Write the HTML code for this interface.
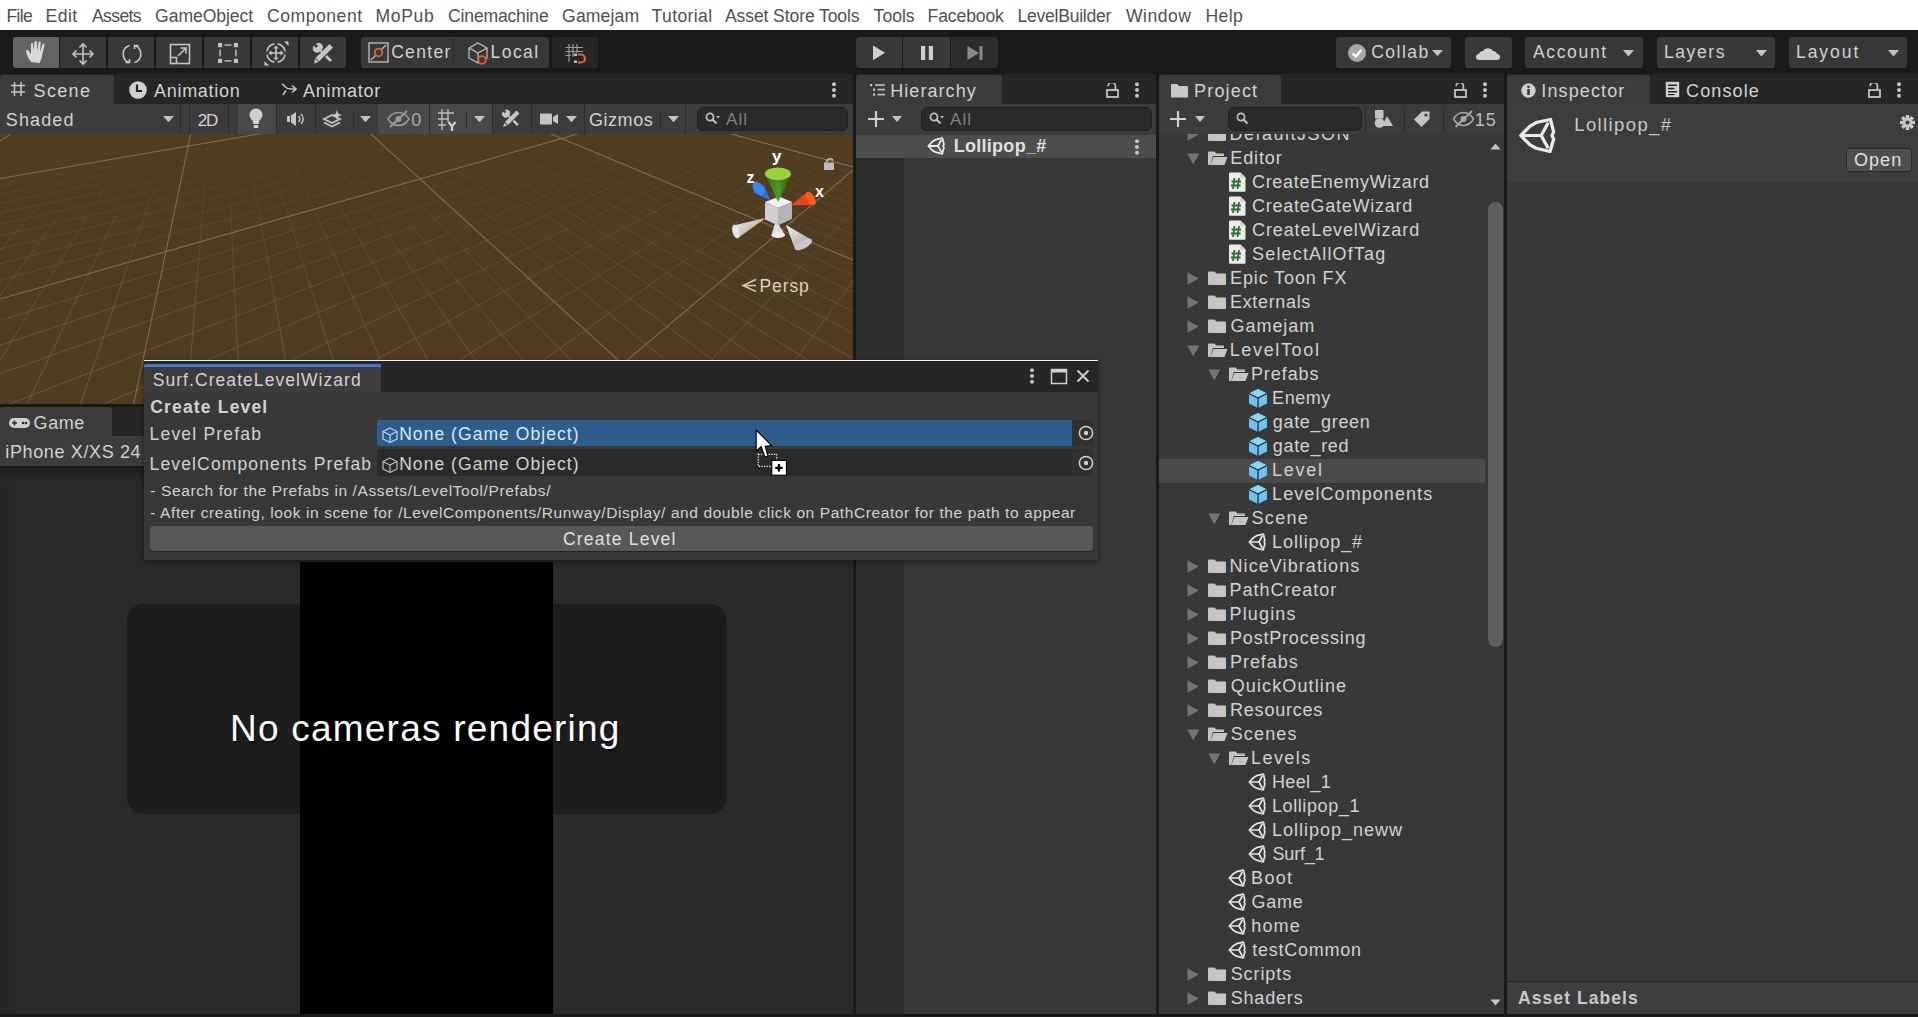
<!DOCTYPE html>
<html><head><meta charset="utf-8"><style>
html,body{margin:0;padding:0;width:1918px;height:1017px;overflow:hidden;background:#191919;}
.a{position:absolute;}
.t{position:absolute;font-family:"Liberation Sans", sans-serif;white-space:pre;}
svg.a{overflow:hidden;}
</style></head><body>
<div class="a" style="left:0px;top:0px;width:1918px;height:30px;background:#ffffff;"></div><div class="t" style="left:6.5568px;top:8.20px;font-size:17.6px;line-height:17.6px;color:#505050;font-weight:400;letter-spacing:-0.71px;">File</div><div class="t" style="left:45.5568px;top:8.20px;font-size:17.6px;line-height:17.6px;color:#505050;font-weight:400;letter-spacing:0.41px;">Edit</div><div class="t" style="left:91.9648px;top:8.20px;font-size:17.6px;line-height:17.6px;color:#505050;font-weight:400;letter-spacing:-0.63px;">Assets</div><div class="t" style="left:155.12px;top:8.20px;font-size:17.6px;line-height:17.6px;color:#505050;font-weight:400;letter-spacing:-0.09px;">GameObject</div><div class="t" style="left:267.12px;top:8.20px;font-size:17.6px;line-height:17.6px;color:#505050;font-weight:400;letter-spacing:0.50px;">Component</div><div class="t" style="left:375.5568px;top:8.20px;font-size:17.6px;line-height:17.6px;color:#505050;font-weight:400;letter-spacing:0.60px;">MoPub</div><div class="t" style="left:448.12px;top:8.20px;font-size:17.6px;line-height:17.6px;color:#505050;font-weight:400;letter-spacing:-0.21px;">Cinemachine</div><div class="t" style="left:562.12px;top:8.20px;font-size:17.6px;line-height:17.6px;color:#505050;font-weight:400;letter-spacing:0.12px;">Gamejam</div><div class="t" style="left:651.6128px;top:8.20px;font-size:17.6px;line-height:17.6px;color:#505050;font-weight:400;letter-spacing:0.36px;">Tutorial</div><div class="t" style="left:724.9648px;top:8.20px;font-size:17.6px;line-height:17.6px;color:#505050;font-weight:400;letter-spacing:-0.12px;">Asset Store Tools</div><div class="t" style="left:873.6128px;top:8.20px;font-size:17.6px;line-height:17.6px;color:#505050;font-weight:400;letter-spacing:-0.01px;">Tools</div><div class="t" style="left:927.5568px;top:8.20px;font-size:17.6px;line-height:17.6px;color:#505050;font-weight:400;letter-spacing:-0.13px;">Facebook</div><div class="t" style="left:1017.5568px;top:8.20px;font-size:17.6px;line-height:17.6px;color:#505050;font-weight:400;letter-spacing:-0.28px;">LevelBuilder</div><div class="t" style="left:1125.9296px;top:8.20px;font-size:17.6px;line-height:17.6px;color:#505050;font-weight:400;letter-spacing:0.49px;">Window</div><div class="t" style="left:1205.5568px;top:8.20px;font-size:17.6px;line-height:17.6px;color:#505050;font-weight:400;letter-spacing:0.32px;">Help</div><div class="a" style="left:0px;top:30px;width:1918px;height:44px;background:#191919;"></div><div class="a" style="left:13px;top:37px;width:334px;height:31px;background:#191919;border-radius:3px;"></div><div class="a" style="left:13px;top:37px;width:46px;height:31px;background:#646464;border-radius:3px 0 0 3px;"></div><div class="a" style="left:60px;top:37px;width:46px;height:31px;background:#383838;border-radius:0;"></div><div class="a" style="left:108px;top:37px;width:46px;height:31px;background:#383838;border-radius:0;"></div><div class="a" style="left:156px;top:37px;width:46px;height:31px;background:#383838;border-radius:0;"></div><div class="a" style="left:204px;top:37px;width:46px;height:31px;background:#383838;border-radius:0;"></div><div class="a" style="left:252px;top:37px;width:46px;height:31px;background:#383838;border-radius:0;"></div><div class="a" style="left:300px;top:37px;width:46px;height:31px;background:#383838;border-radius:0 3px 3px 0;"></div><svg class="a" style="left:25px;top:40px;" width="24" height="26" viewBox="0 0 24 26"><path d="M6 22 C3 18 1.5 14 1 11 C1 10 2.5 9.5 3.5 10.5 L6 14 L6 4 C6 2.6 8 2.6 8 4 L8.5 11 L9.5 2 C9.5 0.6 11.8 0.6 11.8 2 L12 11 L13.5 2.5 C13.7 1.2 15.8 1.3 15.7 2.8 L15 11.5 L17.5 4.5 C18 3.2 19.8 3.7 19.5 5 L17 16 C16.5 19 15.5 21 14.5 23 Z" fill="#d8d8d8"/></svg><svg class="a" style="left:71px;top:42px;" width="24" height="24" viewBox="0 0 24 24"><g stroke="#c4c4c4" stroke-width="1.6" fill="none"><path d="M12 2V22M2 12H22"/><path d="M8.5 5.5L12 2L15.5 5.5M8.5 18.5L12 22L15.5 18.5M5.5 8.5L2 12L5.5 15.5M18.5 8.5L22 12L18.5 15.5"/></g></svg><svg class="a" style="left:120px;top:42px;" width="24" height="24" viewBox="0 0 24 24"><g stroke="#c4c4c4" stroke-width="1.6" fill="none"><path d="M9.5 3.5 A9 9 0 0 0 9 20.5"/><path d="M14.5 20.5 A9 9 0 0 0 15 3.5"/><path d="M5.5 20.5H9.5V17M18.5 3.5H14.5V7"/></g></svg><svg class="a" style="left:168px;top:42px;" width="24" height="24" viewBox="0 0 24 24"><g stroke="#c4c4c4" stroke-width="1.6" fill="none"><rect x="2.5" y="2.5" width="19" height="19"/><path d="M2.5 15.5H8.5V21.5M10 14L18 6M12.5 6H18V11.5"/></g></svg><svg class="a" style="left:216px;top:41px;" width="24" height="24" viewBox="0 0 24 24"><g fill="#c4c4c4"><rect x="2" y="2" width="4.2" height="4.2"/><rect x="17.8" y="2" width="4.2" height="4.2"/><rect x="2" y="17.8" width="4.2" height="4.2"/><rect x="17.8" y="17.8" width="4.2" height="4.2"/><rect x="8.5" y="3.4" width="7" height="1.4"/><rect x="8.5" y="19.2" width="7" height="1.4"/><rect x="3.4" y="8.5" width="1.4" height="7"/><rect x="19.2" y="8.5" width="1.4" height="7"/></g></svg><svg class="a" style="left:264px;top:41px;" width="25" height="25" viewBox="0 0 25 25"><g stroke="#c4c4c4" stroke-width="1.6" fill="none"><path d="M2.9 10.4A9.4 9.4 0 0 1 10.4 2.9M13.6 2.9A9.4 9.4 0 0 1 21.1 10.4M21.1 13.6A9.4 9.4 0 0 1 13.6 21.1M10.4 21.1A9.4 9.4 0 0 1 2.9 13.6"/><path d="M12 6.5V17.5M6.5 12H17.5"/></g><path d="M12 4.5L9.3 7.5H14.7Z M12 19.5L9.3 16.5H14.7Z M4.5 12L7.5 9.3V14.7Z M19.5 12L16.5 9.3V14.7Z M20 0.5H24.5V5Z M0.5 24.5V20L5 24.5Z" fill="#c4c4c4"/></svg><svg class="a" style="left:311px;top:42px;" width="24" height="24" viewBox="0 0 24 24"><g fill="#c4c4c4"><path d="M3 3.5 A4 4 0 0 0 9 9.5 L11 11.5 L12.5 10 L10.5 8 A4 4 0 0 0 5 2 L7 4 L5 6 Z"/><path d="M14 15 L19 20 L21 18 L16 13 Z"/><path d="M18.5 2 L22 5.5 L8 19.5 L4.5 16 Z"/><path d="M4 16.5 L7.5 20 L3 21.5 Z"/></g></svg><div class="a" style="left:361px;top:37px;width:188px;height:31px;background:#383838;border-radius:3px;"></div><div class="a" style="left:453px;top:37px;width:1px;height:31px;background:#2a2a2a;"></div><svg class="a" style="left:368px;top:42px;" width="21" height="21" viewBox="0 0 21 21"><rect x="1" y="1" width="19" height="19" fill="none" stroke="#c4c4c4" stroke-width="1.3"/><path d="M3 18L18 3" stroke="#c4c4c4" stroke-width="1.2"/><circle cx="10.5" cy="10.5" r="3.8" fill="#383838" stroke="#e8622c" stroke-width="1.8"/></svg><div class="t" style="left:391.125px;top:44.29px;font-size:17.5px;line-height:17.5px;color:#d2d2d2;font-weight:400;letter-spacing:1.33px;">Center</div><svg class="a" style="left:467px;top:41px;" width="22" height="25" viewBox="0 0 22 25"><g stroke="#c4c4c4" stroke-width="1.2" fill="none"><path d="M2 7L11 2L20 7L20 17L11 22L2 17Z"/><path d="M2 7L11 12L20 7M11 12V22"/></g><circle cx="15" cy="19" r="3.8" fill="#383838" stroke="#e8622c" stroke-width="1.8"/></svg><div class="t" style="left:490.565px;top:44.29px;font-size:17.5px;line-height:17.5px;color:#d2d2d2;font-weight:400;letter-spacing:1.44px;">Local</div><div class="a" style="left:552px;top:37px;width:46px;height:31px;background:#262626;border-radius:3px;"></div><svg class="a" style="left:565px;top:43px;" width="22" height="22" viewBox="0 0 22 22"><g stroke="#9a9a9a" stroke-width="1.2" fill="none"><path d="M4 1V19M8 1V14M12 1V10M0.5 4.5H18M0.5 8.5H18M0.5 12.5H6"/></g><path d="M13 11.5H16A4 4 0 0 1 16 19.5H13" stroke="#e8622c" stroke-width="2.2" fill="none"/><rect x="9" y="10.5" width="3" height="2.5" fill="#bbb"/><rect x="9" y="17.5" width="3" height="2.5" fill="#bbb"/></svg><div class="a" style="left:856px;top:37px;width:46px;height:31px;background:#383838;border-radius:4px 0 0 4px;"></div><div class="a" style="left:903px;top:37px;width:47px;height:31px;background:#383838;"></div><div class="a" style="left:951px;top:37px;width:47px;height:31px;background:#2c2c2c;border-radius:0 4px 4px 0;"></div><svg class="a" style="left:872px;top:45px;" width="14" height="16" viewBox="0 0 14 16"><path d="M1 0.5L13 7.8L1 15.2Z" fill="#d0d0d0"/></svg><svg class="a" style="left:920px;top:45px;" width="14" height="16" viewBox="0 0 14 16"><rect x="1" y="1" width="4.2" height="14" fill="#d0d0d0"/><rect x="8.8" y="1" width="4.2" height="14" fill="#d0d0d0"/></svg><svg class="a" style="left:967px;top:45px;" width="16" height="16" viewBox="0 0 16 16"><path d="M0.5 1L12 8L0.5 15Z M12.5 1H15.5V15H12.5Z" fill="#8a8a8a"/></svg><div class="a" style="left:1336px;top:37px;width:115px;height:31px;background:#383838;border-radius:3px;"></div><div class="a" style="left:1465px;top:37px;width:47px;height:31px;background:#383838;border-radius:3px;"></div><div class="a" style="left:1525px;top:37px;width:118px;height:31px;background:#383838;border-radius:3px;"></div><div class="a" style="left:1657px;top:37px;width:118px;height:31px;background:#383838;border-radius:3px;"></div><div class="a" style="left:1789px;top:37px;width:118px;height:31px;background:#383838;border-radius:3px;"></div><svg class="a" style="left:1347px;top:43px;" width="20" height="20" viewBox="0 0 20 20"><circle cx="10" cy="10" r="9" fill="#a8a8a8"/><path d="M5.5 10.5L8.8 13.5L14.5 6.8" stroke="#fff" stroke-width="2.3" fill="none"/></svg><div class="t" style="left:1371.125px;top:44.39px;font-size:17.5px;line-height:17.5px;color:#d2d2d2;font-weight:400;letter-spacing:1.50px;">Collab</div><svg class="a" style="left:1431.5px;top:49.5px;" width="11" height="6" viewBox="0 0 11 6"><path d="M0 0H11L5.5 6Z" fill="#c4c4c4"/></svg><svg class="a" style="left:1476px;top:45px;" width="24" height="16" viewBox="0 0 24 16"><path d="M3 15 H21 A3 3 0 0 0 21 9 A4 4 0 0 0 17 6 A6 6 0 0 0 7 6 A4 4 0 0 0 3 9 A3 3 0 0 0 3 15Z" fill="#d0d0d0"/></svg><div class="t" style="left:1532.965px;top:44.39px;font-size:17.5px;line-height:17.5px;color:#d2d2d2;font-weight:400;letter-spacing:1.66px;">Account</div><svg class="a" style="left:1623.0px;top:49.95px;" width="11" height="6.5" viewBox="0 0 11 6.5"><path d="M0 0H11L5.5 6.5Z" fill="#c4c4c4"/></svg><div class="t" style="left:1663.9650000000001px;top:44.39px;font-size:17.5px;line-height:17.5px;color:#d2d2d2;font-weight:400;letter-spacing:1.59px;">Layers</div><svg class="a" style="left:1755.5px;top:49.95px;" width="11" height="6.5" viewBox="0 0 11 6.5"><path d="M0 0H11L5.5 6.5Z" fill="#c4c4c4"/></svg><div class="t" style="left:1795.9650000000001px;top:44.39px;font-size:17.5px;line-height:17.5px;color:#d2d2d2;font-weight:400;letter-spacing:1.96px;">Layout</div><svg class="a" style="left:1887.5px;top:49.95px;" width="11" height="6.5" viewBox="0 0 11 6.5"><path d="M0 0H11L5.5 6.5Z" fill="#c4c4c4"/></svg><div class="a" style="left:0px;top:74px;width:853px;height:30px;background:#262626;"></div><div class="a" style="left:0px;top:75px;width:114px;height:29px;background:#3c3c3c;border-radius:4px 4px 0 0;"></div><svg class="a" style="left:10px;top:81px;" width="16" height="16" viewBox="0 0 16 16"><g stroke="#c4c4c4" stroke-width="1.5"><path d="M4.5 1V15M11 1V15M1 4.5H15M1 11H15"/></g></svg><div class="t" style="left:33.589999999999996px;top:82.46px;font-size:18px;line-height:18px;color:#d2d2d2;font-weight:400;letter-spacing:1.34px;">Scene</div><svg class="a" style="left:129px;top:81px;" width="18" height="18" viewBox="0 0 18 18"><circle cx="9" cy="9" r="8.8" fill="#d0d0d0"/><path d="M8 3.5V10H13" stroke="#232323" stroke-width="2.2" fill="none"/></svg><div class="t" style="left:153.964px;top:82.46px;font-size:18px;line-height:18px;color:#d2d2d2;font-weight:400;letter-spacing:0.72px;">Animation</div><svg class="a" style="left:281px;top:82px;" width="16" height="14" viewBox="0 0 16 14"><path d="M1 1.5L5 5.5C6.5 7 8 7 10 7H15M11 3.5L15 7L11 10.5M5 8.5L2 13" stroke="#c4c4c4" stroke-width="1.6" fill="none"/></svg><div class="t" style="left:302.964px;top:82.46px;font-size:18px;line-height:18px;color:#d2d2d2;font-weight:400;letter-spacing:0.76px;">Animator</div><svg class="a" style="left:831px;top:81px;" width="6" height="18" viewBox="0 0 6 18"><g fill="#c4c4c4"><circle cx="3" cy="3.3" r="2"/><circle cx="3" cy="9" r="2"/><circle cx="3" cy="14.7" r="2"/></g></svg><div class="a" style="left:0px;top:104px;width:853px;height:30px;background:#3c3c3c;"></div><div class="t" style="left:5.789999999999999px;top:110.86px;font-size:18px;line-height:18px;color:#d2d2d2;font-weight:400;letter-spacing:1.12px;">Shaded</div><svg class="a" style="left:162.5px;top:115.9px;" width="11" height="6.2" viewBox="0 0 11 6.2"><path d="M0 0H11L5.5 6.2Z" fill="#c4c4c4"/></svg><div class="a" style="left:180px;top:104px;width:1px;height:30px;background:#2b2b2b;"></div><div class="a" style="left:189px;top:104px;width:1px;height:30px;background:#2b2b2b;"></div><div class="t" style="left:197.85px;top:111.71px;font-size:17px;line-height:17px;color:#d2d2d2;font-weight:500;letter-spacing:-1.28px;">2D</div><div class="a" style="left:228px;top:104px;width:1px;height:30px;background:#2b2b2b;"></div><div class="a" style="left:238px;top:104px;width:38px;height:30px;background:#494949;"></div><svg class="a" style="left:248px;top:108px;" width="16" height="24" viewBox="0 0 16 24"><circle cx="8" cy="7" r="6.5" fill="#d0d0d0"/><path d="M4.5 12H11.5L10.5 16H5.5Z" fill="#d0d0d0"/><rect x="5.5" y="17" width="5" height="3" rx="1.2" fill="#d0d0d0"/></svg><div class="a" style="left:276px;top:104px;width:1px;height:30px;background:#2b2b2b;"></div><svg class="a" style="left:286px;top:111px;" width="20" height="16" viewBox="0 0 20 16"><path d="M1 5H4V11H1Z M5 4.5L10 1V15L5 11.5Z" fill="#c4c4c4"/><path d="M12.5 5A4 4 0 0 1 12.5 11M15 3A7 7 0 0 1 15 13" stroke="#c4c4c4" stroke-width="1.5" fill="none"/></svg><div class="a" style="left:315px;top:104px;width:1px;height:30px;background:#2b2b2b;"></div><svg class="a" style="left:322px;top:109px;" width="24" height="20" viewBox="0 0 24 20"><path d="M2 10L10 6L18 10L10 14Z M2 13.5L10 17.5L18 13.5" stroke="#c4c4c4" stroke-width="1.8" fill="none"/><path d="M15 1L16.3 4.7L20 6L16.3 7.3L15 11L13.7 7.3L10 6L13.7 4.7Z" fill="#c4c4c4"/></svg><div class="a" style="left:353px;top:110px;width:1px;height:18px;background:#2b2b2b;"></div><svg class="a" style="left:359.5px;top:115.9px;" width="11" height="6.2" viewBox="0 0 11 6.2"><path d="M0 0H11L5.5 6.2Z" fill="#c4c4c4"/></svg><div class="a" style="left:378px;top:104px;width:51px;height:30px;background:#494949;"></div><svg class="a" style="left:386px;top:110px;" width="26" height="18" viewBox="0 0 26 18"><path d="M2 9C5 4 9 2.5 12.5 2.5S20 4 23 9C20 14 16 15.5 12.5 15.5S5 14 2 9Z" stroke="#9a9a9a" stroke-width="1.5" fill="none"/><circle cx="12.5" cy="9" r="3" fill="#9a9a9a"/><path d="M4 17L21 1" stroke="#9a9a9a" stroke-width="1.8"/></svg><div class="t" style="left:411.298px;top:111.26px;font-size:18px;line-height:18px;color:#a8a8a8;font-weight:400;letter-spacing:0.00px;">0</div><div class="a" style="left:429px;top:104px;width:63px;height:30px;background:#494949;border-left:1px solid #2b2b2b;box-sizing:border-box;"></div><svg class="a" style="left:437px;top:108px;" width="22" height="24" viewBox="0 0 22 24"><g stroke="#bdbdbd" stroke-width="1.4"><path d="M5 1V22M11 1V14M1 5H17M1 11H12M1 17H9"/></g><path d="M11.5 14L15 18.5L18.5 14M15 18.5V23" stroke="#d0d0d0" stroke-width="2.2" fill="none"/></svg><div class="a" style="left:466px;top:111px;width:1px;height:17px;background:#2b2b2b;"></div><svg class="a" style="left:473.5px;top:115.9px;" width="11" height="6.2" viewBox="0 0 11 6.2"><path d="M0 0H11L5.5 6.2Z" fill="#c4c4c4"/></svg><div class="a" style="left:492px;top:104px;width:1px;height:30px;background:#2b2b2b;"></div><svg class="a" style="left:501px;top:109px;" width="20" height="20" viewBox="0 0 20 20"><g fill="#c4c4c4"><path d="M2 2.5A3.4 3.4 0 0 0 7 7.5L9 9.5L10.2 8.3L8.2 6.3A3.4 3.4 0 0 0 3.8 1.2L5.2 2.8L3.6 4.2Z"/><path d="M11.5 12.5L16 17L17.8 15.2L13.3 10.7Z"/><path d="M15.5 1.5L18.5 4.5L7 16L4 13Z"/><path d="M3.5 14L6 16.5L2 18Z"/></g></svg><div class="a" style="left:531px;top:104px;width:1px;height:30px;background:#2b2b2b;"></div><svg class="a" style="left:539px;top:112px;" width="20" height="14" viewBox="0 0 20 14"><rect x="1" y="1.5" width="12" height="11" rx="1" fill="#c4c4c4"/><path d="M14 5L19 2V12L14 9Z" fill="#c4c4c4"/></svg><svg class="a" style="left:565.5px;top:115.9px;" width="11" height="6.2" viewBox="0 0 11 6.2"><path d="M0 0H11L5.5 6.2Z" fill="#c4c4c4"/></svg><div class="a" style="left:584px;top:104px;width:1px;height:30px;background:#2b2b2b;"></div><div class="t" style="left:589.1px;top:111.26px;font-size:18px;line-height:18px;color:#d2d2d2;font-weight:400;letter-spacing:0.51px;">Gizmos</div><div class="a" style="left:660px;top:110px;width:1px;height:18px;background:#2b2b2b;"></div><svg class="a" style="left:667.5px;top:115.9px;" width="11" height="6.2" viewBox="0 0 11 6.2"><path d="M0 0H11L5.5 6.2Z" fill="#c4c4c4"/></svg><div class="a" style="left:685px;top:104px;width:1px;height:30px;background:#2b2b2b;"></div><div class="a" style="left:697px;top:107px;width:151px;height:24px;background:#2a2a2a;border-radius:6px;border:1px solid #212121;box-sizing:border-box;"></div><svg class="a" style="left:705px;top:112px;" width="16" height="14" viewBox="0 0 16 14"><circle cx="5" cy="5" r="3.6" stroke="#c0c0c0" stroke-width="1.7" fill="none"/><path d="M7.5 7.5L11.5 11.5" stroke="#c0c0c0" stroke-width="2"/><path d="M11 4H15L13 6.5Z" fill="#c0c0c0"/></svg><div class="t" style="left:725.966px;top:111.11px;font-size:17px;line-height:17px;color:#808080;font-weight:400;letter-spacing:1.13px;">All</div><svg class="a" style="left:0px;top:134px;" width="853" height="270" viewBox="0 0 853 270"><defs><linearGradient id="gm" x1="0" y1="0" x2="0" y2="1"><stop offset="0" stop-color="#fff" stop-opacity="0.08"/><stop offset="0.45" stop-color="#fff" stop-opacity="0.55"/><stop offset="1" stop-color="#fff" stop-opacity="1"/></linearGradient><mask id="mk"><rect width="853" height="270" fill="url(#gm)"/></mask></defs><rect width="853" height="270" fill="#503c20"/><path d="M1060.0 -138.0L-1933.2 64.0M1060.0 -138.0L-1933.0 67.2M1060.0 -138.0L-1932.7 70.5M1060.0 -138.0L-1932.5 73.9M1060.0 -138.0L-1932.3 77.4M1060.0 -138.0L-1932.0 81.0M1060.0 -138.0L-1931.7 84.8M1060.0 -138.0L-1931.4 88.6M1060.0 -138.0L-1931.1 92.6M1060.0 -138.0L-1930.5 101.1M1060.0 -138.0L-1930.1 105.6M1060.0 -138.0L-1929.7 110.2M1060.0 -138.0L-1929.3 115.0M1060.0 -138.0L-1928.9 120.1M1060.0 -138.0L-1928.4 125.3M1060.0 -138.0L-1927.9 130.7M1060.0 -138.0L-1927.4 136.3M1060.0 -138.0L-1926.9 142.2M1060.0 -138.0L-1925.7 154.8M1060.0 -138.0L-1925.0 161.5M1060.0 -138.0L-1924.3 168.6M1060.0 -138.0L-1923.5 175.9M1060.0 -138.0L-1922.7 183.7M1060.0 -138.0L-1921.8 191.8M1060.0 -138.0L-1920.9 200.3M1060.0 -138.0L-1919.8 209.3M1060.0 -138.0L-1918.7 218.8M1060.0 -138.0L-1916.2 239.4M1060.0 -138.0L-1914.7 250.6M1060.0 -138.0L-1913.2 262.4M1060.0 -138.0L-1911.4 275.0M1060.0 -138.0L-1909.5 288.5M1060.0 -138.0L-1907.4 302.8M1060.0 -138.0L-1905.1 318.1M1060.0 -138.0L-1902.6 334.5M1060.0 -138.0L-1899.7 352.1M1060.0 -138.0L-1892.9 391.5M1060.0 -138.0L-1888.9 413.6M1060.0 -138.0L-1884.3 437.6M1060.0 -138.0L-1879.0 463.7M1060.0 -138.0L-1873.0 492.3M1060.0 -138.0L-1866.1 523.7M1060.0 -138.0L-1858.1 558.2M1060.0 -138.0L-1848.7 596.4M1060.0 -138.0L-1837.6 639.0M1060.0 -138.0L-1808.7 739.9M1060.0 -138.0L-1789.5 800.4M1060.0 -138.0L-1765.9 869.2M1060.0 -138.0L-1736.5 948.2M1060.0 -138.0L-1699.3 1039.4M1060.0 -138.0L-1651.6 1145.5M1060.0 -138.0L-1589.1 1269.9M1060.0 -138.0L-1505.9 1416.5M1060.0 -138.0L-1392.6 1589.6M1060.0 -138.0L-1015.0 2028.6M1060.0 -138.0L-703.7 2288.8M1060.0 -138.0L-272.6 2549.8M220.0 -138.0L-2734.8 381.0M220.0 -138.0L-2732.7 392.8M220.0 -138.0L-2728.0 418.1M220.0 -138.0L-2725.4 431.6M220.0 -138.0L-2722.6 445.8M220.0 -138.0L-2719.6 460.8M220.0 -138.0L-2716.4 476.4M220.0 -138.0L-2712.9 492.9M220.0 -138.0L-2709.1 510.3M220.0 -138.0L-2705.0 528.6M220.0 -138.0L-2700.5 548.0M220.0 -138.0L-2690.3 590.3M220.0 -138.0L-2684.4 613.3M220.0 -138.0L-2677.9 637.9M220.0 -138.0L-2670.8 664.0M220.0 -138.0L-2662.9 691.8M220.0 -138.0L-2654.2 721.6M220.0 -138.0L-2644.5 753.5M220.0 -138.0L-2633.6 787.7M220.0 -138.0L-2621.4 824.5M220.0 -138.0L-2592.1 907.0M220.0 -138.0L-2574.5 953.3M220.0 -138.0L-2554.3 1003.6M220.0 -138.0L-2531.1 1058.4M220.0 -138.0L-2504.4 1118.0M220.0 -138.0L-2473.4 1183.2M220.0 -138.0L-2437.2 1254.6M220.0 -138.0L-2394.7 1332.9M220.0 -138.0L-2344.4 1418.9M220.0 -138.0L-2212.9 1617.3M220.0 -138.0L-2126.7 1731.0M220.0 -138.0L-2022.3 1855.0M220.0 -138.0L-1895.5 1989.1M220.0 -138.0L-1741.4 2132.0M220.0 -138.0L-1554.4 2281.0M220.0 -138.0L-1329.2 2431.0M220.0 -138.0L-1061.7 2574.4M220.0 -138.0L-750.9 2700.5M220.0 -138.0L-22.3 2852.2M220.0 -138.0L368.2 2858.3M220.0 -138.0L751.4 2814.6M220.0 -138.0L1109.5 2727.1M220.0 -138.0L1430.5 2607.0M220.0 -138.0L1708.5 2466.7M220.0 -138.0L1943.6 2317.4M220.0 -138.0L2139.4 2167.6M220.0 -138.0L2300.9 2022.9M220.0 -138.0L2543.2 1760.1M220.0 -138.0L2633.5 1643.9M220.0 -138.0L2708.4 1537.7M220.0 -138.0L2770.8 1441.0M220.0 -138.0L2823.3 1353.0M220.0 -138.0L2867.5 1272.9M220.0 -138.0L2905.2 1199.9M220.0 -138.0L2937.3 1133.3M220.0 -138.0L2965.0 1072.3M220.0 -138.0L3009.8 965.1M220.0 -138.0L3028.1 917.9M220.0 -138.0L3044.1 874.2M220.0 -138.0L3058.2 833.8M220.0 -138.0L3070.8 796.4M220.0 -138.0L3082.0 761.6M220.0 -138.0L3091.9 729.1M220.0 -138.0L3100.9 698.9M220.0 -138.0L3109.0 670.6M220.0 -138.0L3122.9 619.1M220.0 -138.0L3128.9 595.7M220.0 -138.0L3134.4 573.7M220.0 -138.0L3139.4 552.9M220.0 -138.0L3143.9 533.2M220.0 -138.0L3148.1 514.7M220.0 -138.0L3152.0 497.0M220.0 -138.0L3155.6 480.3M220.0 -138.0L3158.9 464.5M220.0 -138.0L3164.8 435.0M220.0 -138.0L3167.4 421.3M220.0 -138.0L3169.8 408.3M220.0 -138.0L3172.1 395.8M220.0 -138.0L3174.3 383.9M220.0 -138.0L3176.3 372.4M220.0 -138.0L3178.1 361.5M220.0 -138.0L3179.9 351.0M220.0 -138.0L3181.5 341.0M220.0 -138.0L3184.5 322.0M220.0 -138.0L3185.9 313.1M220.0 -138.0L3187.2 304.5M220.0 -138.0L3188.4 296.3M220.0 -138.0L3189.6 288.3M220.0 -138.0L3190.7 280.6M220.0 -138.0L3191.7 273.2M220.0 -138.0L3192.7 266.0M220.0 -138.0L3193.6 259.1M220.0 -138.0L3195.3 246.0M220.0 -138.0L3196.1 239.7M220.0 -138.0L3196.9 233.6M220.0 -138.0L3197.6 227.8M220.0 -138.0L3198.3 222.1M220.0 -138.0L3199.0 216.6M220.0 -138.0L3199.6 211.2M220.0 -138.0L3200.2 206.0M220.0 -138.0L3200.8 201.0M220.0 -138.0L3201.9 191.3M220.0 -138.0L3202.4 186.7M220.0 -138.0L3202.9 182.2M220.0 -138.0L3203.3 177.8M220.0 -138.0L3203.8 173.6M220.0 -138.0L3204.2 169.4M220.0 -138.0L3204.6 165.4M220.0 -138.0L3205.0 161.5M220.0 -138.0L3205.4 157.6" stroke="#7a6444" stroke-opacity="0.75" stroke-width="1" fill="none" mask="url(#mk)"/><path d="M1060.0 -138.0L-1933.4 60.9M1060.0 -138.0L-1930.8 96.8M1060.0 -138.0L-1926.3 148.4M1060.0 -138.0L-1917.5 228.8M1060.0 -138.0L-1896.5 371.0M1060.0 -138.0L-1824.5 686.5M1060.0 -138.0L-1235.7 1793.3M220.0 -138.0L-2730.4 405.2M220.0 -138.0L-2695.6 568.5M220.0 -138.0L-2607.7 864.2M220.0 -138.0L-2284.5 1513.5M220.0 -138.0L-400.9 2797.0M220.0 -138.0L2433.8 1886.6M220.0 -138.0L2989.0 1016.5M220.0 -138.0L3116.3 644.0M220.0 -138.0L3161.9 449.4M220.0 -138.0L3183.1 331.3M220.0 -138.0L3194.5 252.4M220.0 -138.0L3201.3 196.1" stroke="#877155" stroke-opacity="0.9" stroke-width="1.1" fill="none"/></svg><svg class="a" style="left:730px;top:145px;" width="110" height="110" viewBox="0 0 110 110"><defs>
<linearGradient id="gw" x1="0" y1="0" x2="1" y2="1"><stop offset="0" stop-color="#f0f0f0"/><stop offset="1" stop-color="#9a9a9a"/></linearGradient>
<linearGradient id="gg" x1="0" y1="0" x2="1" y2="0"><stop offset="0" stop-color="#2f6d1a"/><stop offset="0.5" stop-color="#4d9a22"/><stop offset="1" stop-color="#2a5a16"/></linearGradient>
</defs><path d="M35.6 73.0L3.5 80.5L8.0 93.0Z" fill="url(#gw)"/><ellipse cx="6" cy="86.5" rx="3.5" ry="7" transform="rotate(-15 6 86.5)" fill="#e6e6e6"/><path d="M56.0 80.0L65.0 104.0L82.0 95.0Z" fill="url(#gw)"/><ellipse cx="73.5" cy="99.5" rx="9.5" ry="4" transform="rotate(-28 73.5 99.5)" fill="#c8c8c8"/><path d="M46.0 75.0L41.5 90.0L55.0 90.0Z" fill="#e0e0e0"/><ellipse cx="48.200000000000045" cy="90" rx="6.8" ry="3" fill="#eeeeee"/><path d="M35.0 57.0L49.0 51.5L62.0 57.0L48.0 63.0Z" fill="#f2f2f2"/><path d="M35.0 57.0L48.0 63.0L48.0 80.5L35.0 74.5Z" fill="#cfcfcf"/><path d="M48.0 63.0L62.0 57.0L62.0 74.0L48.0 80.5Z" fill="#b4b4b4"/><path d="M40.4 55.6L23.0 47.0L34.0 40.0Z" fill="#2f6fe0"/><ellipse cx="28.5" cy="43.5" rx="5" ry="7.5" transform="rotate(-35 28.5 43.5)" fill="#3d86f2"/><path d="M60.8 60.3L77.0 47.0L84.5 60.0Z" fill="#e2481a"/><ellipse cx="80.79999999999995" cy="53.5" rx="3.8" ry="7.5" transform="rotate(-30 80.79999999999995 53.5)" fill="#ff5a22"/><path d="M35.0 29.0L61.0 29.0L48.2 57.0Z" fill="url(#gg)"/><ellipse cx="47.89999999999998" cy="28.80000000000001" rx="13" ry="6.3" fill="#9ad23c"/><text x="42" y="17" font-family="Liberation Sans" font-size="17" font-weight="700" fill="#ffffff">y</text><text x="16.5" y="38" font-family="Liberation Sans" font-size="16" font-weight="700" fill="#ffffff">z</text><text x="85" y="51.5" font-family="Liberation Sans" font-size="16" font-weight="700" fill="#ffffff">x</text><path d="M96.5 17.5A3.5 3.5 0 0 1 103.0 15.5" stroke="#c8c8c8" stroke-width="1.6" fill="none"/><rect x="94" y="17.5" width="10" height="7.5" fill="#bdbdbd"/></svg><svg class="a" style="left:741px;top:278px;" width="16" height="15" viewBox="0 0 16 15"><path d="M15 1.5L2 7.5L15 13.5M15 7.5H4" stroke="#d4c8b4" stroke-width="1.5" fill="none"/></svg><div class="t" style="left:759.565px;top:277.59px;font-size:17.5px;line-height:17.5px;color:#ddd2c0;font-weight:400;letter-spacing:0.86px;">Persp</div><div class="a" style="left:0px;top:404px;width:853px;height:3px;background:#191919;"></div><div class="a" style="left:0px;top:407px;width:853px;height:29px;background:#262626;"></div><div class="a" style="left:0px;top:407px;width:112px;height:29px;background:#3c3c3c;border-radius:4px 4px 0 0;"></div><svg class="a" style="left:9px;top:417px;" width="21" height="12" viewBox="0 0 21 12"><path d="M5 1H16A4.5 4.5 0 0 1 16 11H5A4.5 4.5 0 0 1 5 1Z" fill="#d0d0d0"/><path d="M3 6H8M5.5 3.5V8.5" stroke="#2a2a2a" stroke-width="1.6"/><circle cx="14" cy="6" r="1.3" fill="#2a2a2a"/><circle cx="17" cy="6" r="1.3" fill="#2a2a2a"/></svg><div class="t" style="left:33.6px;top:414.26px;font-size:18px;line-height:18px;color:#d2d2d2;font-weight:400;letter-spacing:0.56px;">Game</div><div class="a" style="left:0px;top:436px;width:853px;height:30px;background:#3c3c3c;"></div><div class="t" style="left:5.312px;top:443.26px;font-size:18px;line-height:18px;color:#d2d2d2;font-weight:400;letter-spacing:0.63px;">iPhone X/XS 24</div><div class="a" style="left:0px;top:466px;width:853px;height:548px;background:#2a2a2a;"></div><div class="a" style="left:0px;top:466px;width:15px;height:548px;background:#272727;"></div><div class="a" style="left:0px;top:466px;width:853px;height:16px;background:linear-gradient(#1b1b1b,#2a2a2a);"></div><div class="a" style="left:127px;top:604px;width:600px;height:210px;background:#1d1d1d;border-radius:17px;"></div><div class="a" style="left:300px;top:562px;width:253px;height:452px;background:#000000;"></div><div class="t" style="left:229.966px;top:710.18px;font-size:37px;line-height:37px;color:#ffffff;font-weight:400;text-shadow:1px 2px 2px rgba(0,0,0,0.6);letter-spacing:1.23px;">No cameras rendering</div><div class="a" style="left:853px;top:74px;width:3px;height:943px;background:#191919;"></div><div class="a" style="left:856px;top:74px;width:300px;height:30px;background:#262626;"></div><div class="a" style="left:856px;top:75px;width:146px;height:29px;background:#3c3c3c;border-radius:4px 4px 0 0;"></div><svg class="a" style="left:869px;top:83px;" width="17" height="14" viewBox="0 0 17 14"><g fill="#c4c4c4"><rect x="1" y="1" width="2.2" height="2.2"/><rect x="4" y="5.5" width="2.2" height="2.2"/><rect x="4" y="10.5" width="2.2" height="2.2"/><rect x="6" y="1.2" width="10" height="1.6"/><rect x="8.5" y="5.8" width="7.5" height="1.6"/><rect x="8.5" y="10.8" width="7.5" height="1.6"/></g></svg><div class="t" style="left:890.224px;top:82.46px;font-size:18px;line-height:18px;color:#d2d2d2;font-weight:400;letter-spacing:1.06px;">Hierarchy</div><svg class="a" style="left:1106px;top:83px;" width="14" height="16" viewBox="0 0 14 16"><path d="M2.2 3.2A3.6 3.6 0 0 1 9.4 2.8V7" stroke="#c4c4c4" stroke-width="1.7" fill="none"/><rect x="1" y="7" width="11" height="7" fill="none" stroke="#c4c4c4" stroke-width="1.8"/></svg><svg class="a" style="left:1134px;top:81px;" width="6" height="18" viewBox="0 0 6 18"><g fill="#c4c4c4"><circle cx="3" cy="3.3" r="2"/><circle cx="3" cy="9" r="2"/><circle cx="3" cy="14.7" r="2"/></g></svg><div class="a" style="left:856px;top:104px;width:300px;height:31px;background:#3c3c3c;"></div><svg class="a" style="left:866px;top:109px;" width="20" height="20" viewBox="0 0 20 20"><path d="M10 2V18M2 10H18" stroke="#d0d0d0" stroke-width="2.2"/></svg><svg class="a" style="left:891.5px;top:116.0px;" width="10" height="6" viewBox="0 0 10 6"><path d="M0 0H10L5.0 6Z" fill="#c4c4c4"/></svg><div class="a" style="left:921px;top:107px;width:231px;height:24px;background:#2a2a2a;border-radius:6px;border:1px solid #212121;box-sizing:border-box;"></div><svg class="a" style="left:929px;top:112px;" width="16" height="14" viewBox="0 0 16 14"><circle cx="5" cy="5" r="3.6" stroke="#c0c0c0" stroke-width="1.7" fill="none"/><path d="M7.5 7.5L11.5 11.5" stroke="#c0c0c0" stroke-width="2"/><path d="M11 4H15L13 6.5Z" fill="#c0c0c0"/></svg><div class="t" style="left:949.966px;top:111.11px;font-size:17px;line-height:17px;color:#808080;font-weight:400;letter-spacing:1.13px;">All</div><div class="a" style="left:856px;top:135px;width:300px;height:879px;background:#383838;"></div><div class="a" style="left:856px;top:158px;width:48px;height:856px;background:#2e2e2e;"></div><div class="a" style="left:856px;top:135px;width:300px;height:23px;background:#4d4d4d;"></div><svg class="a" style="left:926.5px;top:137px;" width="18" height="18" viewBox="0 0 18 18"><g transform="scale(1.0 1.0)" stroke="#e8e8e8" stroke-width="1.8" fill="none" stroke-linejoin="round"><path d="M1.3 9L5.7 4.4L8.6 2.7L15.4 1.2L16.9 7.3L16.1 9L16.9 10.7L15.2 16.8L8.6 15.2L5.7 13.6Z"/><path d="M1.5 9H11L14.3 2.8M11 9L14.3 15.2"/></g></svg><div class="t" style="left:953.712px;top:136.96px;font-size:18px;line-height:18px;color:#e0e0e0;font-weight:700;letter-spacing:0.28px;">Lollipop_#</div><svg class="a" style="left:1134px;top:137.5px;" width="6" height="18" viewBox="0 0 6 18"><g fill="#c4c4c4"><circle cx="3" cy="3.3" r="2"/><circle cx="3" cy="9" r="2"/><circle cx="3" cy="14.7" r="2"/></g></svg><div class="a" style="left:1156px;top:74px;width:3px;height:943px;background:#191919;"></div><div class="a" style="left:1159px;top:74px;width:345px;height:30px;background:#262626;"></div><div class="a" style="left:1159px;top:75px;width:122px;height:29px;background:#3c3c3c;border-radius:4px 4px 0 0;"></div><svg class="a" style="left:1170px;top:83px;" width="19" height="15" viewBox="0 0 19 15"><path d="M1 2Q1 1 2 1H7L9 3H17Q18 3 18 4V13.5Q18 14.5 17 14.5H2Q1 14.5 1 13.5Z" fill="#c8c8c8"/></svg><div class="t" style="left:1194.1239999999998px;top:82.46px;font-size:18px;line-height:18px;color:#d2d2d2;font-weight:400;letter-spacing:1.16px;">Project</div><svg class="a" style="left:1454px;top:83px;" width="14" height="16" viewBox="0 0 14 16"><path d="M2.2 3.2A3.6 3.6 0 0 1 9.4 2.8V7" stroke="#c4c4c4" stroke-width="1.7" fill="none"/><rect x="1" y="7" width="11" height="7" fill="none" stroke="#c4c4c4" stroke-width="1.8"/></svg><svg class="a" style="left:1482px;top:81px;" width="6" height="18" viewBox="0 0 6 18"><g fill="#c4c4c4"><circle cx="3" cy="3.3" r="2"/><circle cx="3" cy="9" r="2"/><circle cx="3" cy="14.7" r="2"/></g></svg><div class="a" style="left:1159px;top:104px;width:345px;height:30px;background:#3c3c3c;"></div><svg class="a" style="left:1168px;top:109px;" width="20" height="20" viewBox="0 0 20 20"><path d="M10 2V18M2 10H18" stroke="#d0d0d0" stroke-width="2.2"/></svg><svg class="a" style="left:1194.5px;top:116.0px;" width="10" height="6" viewBox="0 0 10 6"><path d="M0 0H10L5.0 6Z" fill="#c4c4c4"/></svg><div class="a" style="left:1227.6px;top:107px;width:134.4px;height:23.5px;background:#2a2a2a;border-radius:6px;border:1px solid #212121;box-sizing:border-box;"></div><svg class="a" style="left:1236px;top:112px;" width="16" height="14" viewBox="0 0 16 14"><circle cx="5" cy="5" r="3.6" stroke="#c0c0c0" stroke-width="1.7" fill="none"/><path d="M7.5 7.5L11.5 11.5" stroke="#c0c0c0" stroke-width="2"/></svg><div class="a" style="left:1365px;top:106px;width:1px;height:27px;background:#2b2b2b;"></div><div class="a" style="left:1404px;top:106px;width:1px;height:27px;background:#2b2b2b;"></div><div class="a" style="left:1443px;top:106px;width:1px;height:27px;background:#2b2b2b;"></div><svg class="a" style="left:1374px;top:109px;" width="20" height="20" viewBox="0 0 20 20"><circle cx="5.5" cy="14" r="4.8" fill="#c4c4c4"/><rect x="1" y="1" width="8.5" height="8.5" fill="#c4c4c4"/><path d="M13 7L19 17H8Z" fill="#c4c4c4"/></svg><svg class="a" style="left:1413px;top:110px;" width="18" height="18" viewBox="0 0 18 18"><path d="M9 1.5H16.5V9L8.5 17L1 9.5Z" fill="#c4c4c4"/><circle cx="13" cy="5" r="1.6" fill="#3c3c3c"/></svg><svg class="a" style="left:1452px;top:110px;" width="24" height="18" viewBox="0 0 24 18"><path d="M1.5 9C4.5 4 8 2.5 11.5 2.5S18.5 4 21.5 9C18.5 14 15 15.5 11.5 15.5S4.5 14 1.5 9Z" stroke="#a8a8a8" stroke-width="1.5" fill="none"/><circle cx="11.5" cy="9" r="3" fill="#a8a8a8"/><path d="M3.5 17L20 1" stroke="#a8a8a8" stroke-width="1.8"/></svg><div class="t" style="left:1474.632px;top:111.26px;font-size:18px;line-height:18px;color:#bdbdbd;font-weight:400;letter-spacing:1.09px;">15</div><div class="a" style="left:1159px;top:134px;width:345px;height:880px;background:#383838;"></div><svg class="a" style="left:1159px;top:134px;" width="345" height="880" viewBox="0 0 345 880"></svg><div class="a" style="left:1159px;top:459px;width:326px;height:24px;background:#4a4a4a;"></div><div class="a" style="left:1159px;top:134px;width:328px;height:880px;overflow:hidden;"><svg class="a" style="left:48px;top:-8px;" width="20" height="16" viewBox="0 0 20 16"><path d="M1 2.5Q1 1.5 2 1.5H7.5L9.5 3.5H18Q19 3.5 19 4.5V14Q19 15 18 15H2Q1 15 1 14Z" fill="#c4c4c4"/></svg><svg class="a" style="left:28px;top:-6px;" width="12" height="13" viewBox="0 0 12 13"><path d="M0.5 0.3V12.7L11.5 6.5Z" fill="#747474"/></svg><div class="t" style="left:70.52px;top:-9.24px;font-size:18px;line-height:18px;color:#d2d2d2;letter-spacing:1.49px;">DefaultJSON</div><svg class="a" style="left:48px;top:16px;" width="21" height="16" viewBox="0 0 21 16"><path d="M1 2.5Q1 1.5 2 1.5H7.5L9.5 3.5H16Q17 3.5 17 4.5V6H6L3 15H1.5Q1 15 1 14Z" fill="#c4c4c4"/><path d="M6.5 7H20.5L17.5 15H3Z" fill="#c4c4c4"/></svg><svg class="a" style="left:27.5px;top:19px;" width="13" height="12" viewBox="0 0 13 12"><path d="M0.3 0.5H12.3L6.3 11.5Z" fill="#747474"/></svg><div class="t" style="left:71.32px;top:14.76px;font-size:18px;line-height:18px;color:#d2d2d2;letter-spacing:0.87px;">Editor</div><svg class="a" style="left:69px;top:38px;" width="18" height="20" viewBox="0 0 18 20"><path d="M1 1.5Q1 0.5 2 0.5H12.5L17.5 5.5V19Q17.5 19.8 16.5 19.8H2Q1 19.8 1 19Z" fill="#ececec"/><path d="M12.5 0.5V5.5H17.5" fill="#c8c8c8"/><g stroke="#2b6e2b" stroke-width="1.8"><path d="M6.5 6L5 17M11 6L9.5 17M3.5 9.5H13M3 13.5H12.5"/></g></svg><div class="t" style="left:93.00px;top:38.76px;font-size:18px;line-height:18px;color:#d2d2d2;letter-spacing:0.69px;">CreateEnemyWizard</div><svg class="a" style="left:69px;top:62px;" width="18" height="20" viewBox="0 0 18 20"><path d="M1 1.5Q1 0.5 2 0.5H12.5L17.5 5.5V19Q17.5 19.8 16.5 19.8H2Q1 19.8 1 19Z" fill="#ececec"/><path d="M12.5 0.5V5.5H17.5" fill="#c8c8c8"/><g stroke="#2b6e2b" stroke-width="1.8"><path d="M6.5 6L5 17M11 6L9.5 17M3.5 9.5H13M3 13.5H12.5"/></g></svg><div class="t" style="left:93.00px;top:62.76px;font-size:18px;line-height:18px;color:#d2d2d2;letter-spacing:0.74px;">CreateGateWizard</div><svg class="a" style="left:69px;top:86px;" width="18" height="20" viewBox="0 0 18 20"><path d="M1 1.5Q1 0.5 2 0.5H12.5L17.5 5.5V19Q17.5 19.8 16.5 19.8H2Q1 19.8 1 19Z" fill="#ececec"/><path d="M12.5 0.5V5.5H17.5" fill="#c8c8c8"/><g stroke="#2b6e2b" stroke-width="1.8"><path d="M6.5 6L5 17M11 6L9.5 17M3.5 9.5H13M3 13.5H12.5"/></g></svg><div class="t" style="left:93.00px;top:86.76px;font-size:18px;line-height:18px;color:#d2d2d2;letter-spacing:0.88px;">CreateLevelWizard</div><svg class="a" style="left:69px;top:110px;" width="18" height="20" viewBox="0 0 18 20"><path d="M1 1.5Q1 0.5 2 0.5H12.5L17.5 5.5V19Q17.5 19.8 16.5 19.8H2Q1 19.8 1 19Z" fill="#ececec"/><path d="M12.5 0.5V5.5H17.5" fill="#c8c8c8"/><g stroke="#2b6e2b" stroke-width="1.8"><path d="M6.5 6L5 17M11 6L9.5 17M3.5 9.5H13M3 13.5H12.5"/></g></svg><div class="t" style="left:93.09px;top:110.76px;font-size:18px;line-height:18px;color:#d2d2d2;letter-spacing:1.16px;">SelectAllOfTag</div><svg class="a" style="left:48px;top:136px;" width="20" height="16" viewBox="0 0 20 16"><path d="M1 2.5Q1 1.5 2 1.5H7.5L9.5 3.5H18Q19 3.5 19 4.5V14Q19 15 18 15H2Q1 15 1 14Z" fill="#c4c4c4"/></svg><svg class="a" style="left:28px;top:138px;" width="12" height="13" viewBox="0 0 12 13"><path d="M0.5 0.3V12.7L11.5 6.5Z" fill="#747474"/></svg><div class="t" style="left:71.02px;top:134.76px;font-size:18px;line-height:18px;color:#d2d2d2;letter-spacing:0.88px;">Epic Toon FX</div><svg class="a" style="left:48px;top:160px;" width="20" height="16" viewBox="0 0 20 16"><path d="M1 2.5Q1 1.5 2 1.5H7.5L9.5 3.5H18Q19 3.5 19 4.5V14Q19 15 18 15H2Q1 15 1 14Z" fill="#c4c4c4"/></svg><svg class="a" style="left:28px;top:162px;" width="12" height="13" viewBox="0 0 12 13"><path d="M0.5 0.3V12.7L11.5 6.5Z" fill="#747474"/></svg><div class="t" style="left:71.02px;top:158.76px;font-size:18px;line-height:18px;color:#d2d2d2;letter-spacing:0.66px;">Externals</div><svg class="a" style="left:48px;top:184px;" width="20" height="16" viewBox="0 0 20 16"><path d="M1 2.5Q1 1.5 2 1.5H7.5L9.5 3.5H18Q19 3.5 19 4.5V14Q19 15 18 15H2Q1 15 1 14Z" fill="#c4c4c4"/></svg><svg class="a" style="left:28px;top:186px;" width="12" height="13" viewBox="0 0 12 13"><path d="M0.5 0.3V12.7L11.5 6.5Z" fill="#747474"/></svg><div class="t" style="left:71.60px;top:182.76px;font-size:18px;line-height:18px;color:#d2d2d2;letter-spacing:0.93px;">Gamejam</div><svg class="a" style="left:48px;top:208px;" width="21" height="16" viewBox="0 0 21 16"><path d="M1 2.5Q1 1.5 2 1.5H7.5L9.5 3.5H16Q17 3.5 17 4.5V6H6L3 15H1.5Q1 15 1 14Z" fill="#c4c4c4"/><path d="M6.5 7H20.5L17.5 15H3Z" fill="#c4c4c4"/></svg><svg class="a" style="left:27.5px;top:211px;" width="13" height="12" viewBox="0 0 13 12"><path d="M0.3 0.5H12.3L6.3 11.5Z" fill="#747474"/></svg><div class="t" style="left:70.72px;top:206.76px;font-size:18px;line-height:18px;color:#d2d2d2;letter-spacing:1.64px;">LevelTool</div><svg class="a" style="left:69px;top:232px;" width="21" height="16" viewBox="0 0 21 16"><path d="M1 2.5Q1 1.5 2 1.5H7.5L9.5 3.5H16Q17 3.5 17 4.5V6H6L3 15H1.5Q1 15 1 14Z" fill="#c4c4c4"/><path d="M6.5 7H20.5L17.5 15H3Z" fill="#c4c4c4"/></svg><svg class="a" style="left:49px;top:235px;" width="13" height="12" viewBox="0 0 13 12"><path d="M0.3 0.5H12.3L6.3 11.5Z" fill="#747474"/></svg><div class="t" style="left:91.92px;top:230.76px;font-size:18px;line-height:18px;color:#d2d2d2;letter-spacing:0.93px;">Prefabs</div><svg class="a" style="left:89px;top:253.5px;" width="20" height="21" viewBox="0 0 20 21"><path d="M10 1L19 5.5V15.5L10 20L1 15.5V5.5Z" fill="#6cc2f5"/><path d="M10 1L19 5.5L10 10L1 5.5Z" fill="#8ed3fa"/><path d="M1 5.5L10 10L19 5.5M10 10V20" stroke="#2a2a2a" stroke-width="1.3" fill="none"/></svg><div class="t" style="left:113.12px;top:254.76px;font-size:18px;line-height:18px;color:#d2d2d2;letter-spacing:0.55px;">Enemy</div><svg class="a" style="left:89px;top:277.5px;" width="20" height="21" viewBox="0 0 20 21"><path d="M10 1L19 5.5V15.5L10 20L1 15.5V5.5Z" fill="#6cc2f5"/><path d="M10 1L19 5.5L10 10L1 5.5Z" fill="#8ed3fa"/><path d="M1 5.5L10 10L19 5.5M10 10V20" stroke="#2a2a2a" stroke-width="1.3" fill="none"/></svg><div class="t" style="left:113.84px;top:278.76px;font-size:18px;line-height:18px;color:#d2d2d2;letter-spacing:0.65px;">gate_green</div><svg class="a" style="left:89px;top:301.5px;" width="20" height="21" viewBox="0 0 20 21"><path d="M10 1L19 5.5V15.5L10 20L1 15.5V5.5Z" fill="#6cc2f5"/><path d="M10 1L19 5.5L10 10L1 5.5Z" fill="#8ed3fa"/><path d="M1 5.5L10 10L19 5.5M10 10V20" stroke="#2a2a2a" stroke-width="1.3" fill="none"/></svg><div class="t" style="left:113.84px;top:302.76px;font-size:18px;line-height:18px;color:#d2d2d2;letter-spacing:0.66px;">gate_red</div><svg class="a" style="left:89px;top:325.5px;" width="20" height="21" viewBox="0 0 20 21"><path d="M10 1L19 5.5V15.5L10 20L1 15.5V5.5Z" fill="#6cc2f5"/><path d="M10 1L19 5.5L10 10L1 5.5Z" fill="#8ed3fa"/><path d="M1 5.5L10 10L19 5.5M10 10V20" stroke="#2a2a2a" stroke-width="1.3" fill="none"/></svg><div class="t" style="left:113.12px;top:326.76px;font-size:18px;line-height:18px;color:#d2d2d2;letter-spacing:1.71px;">Level</div><svg class="a" style="left:89px;top:349.5px;" width="20" height="21" viewBox="0 0 20 21"><path d="M10 1L19 5.5V15.5L10 20L1 15.5V5.5Z" fill="#6cc2f5"/><path d="M10 1L19 5.5L10 10L1 5.5Z" fill="#8ed3fa"/><path d="M1 5.5L10 10L19 5.5M10 10V20" stroke="#2a2a2a" stroke-width="1.3" fill="none"/></svg><div class="t" style="left:113.12px;top:350.76px;font-size:18px;line-height:18px;color:#d2d2d2;letter-spacing:1.07px;">LevelComponents</div><svg class="a" style="left:69px;top:376px;" width="21" height="16" viewBox="0 0 21 16"><path d="M1 2.5Q1 1.5 2 1.5H7.5L9.5 3.5H16Q17 3.5 17 4.5V6H6L3 15H1.5Q1 15 1 14Z" fill="#c4c4c4"/><path d="M6.5 7H20.5L17.5 15H3Z" fill="#c4c4c4"/></svg><svg class="a" style="left:49px;top:379px;" width="13" height="12" viewBox="0 0 13 12"><path d="M0.3 0.5H12.3L6.3 11.5Z" fill="#747474"/></svg><div class="t" style="left:92.59px;top:374.76px;font-size:18px;line-height:18px;color:#d2d2d2;letter-spacing:1.29px;">Scene</div><svg class="a" style="left:89px;top:399px;" width="18" height="18" viewBox="0 0 18 18"><g transform="scale(1.0 1.0)" stroke="#e4e4e4" stroke-width="1.7" fill="none" stroke-linejoin="round"><path d="M1.3 9L5.7 4.4L8.6 2.7L15.4 1.2L16.9 7.3L16.1 9L16.9 10.7L15.2 16.8L8.6 15.2L5.7 13.6Z"/><path d="M1.5 9H11L14.3 2.8M11 9L14.3 15.2"/></g></svg><div class="t" style="left:113.12px;top:398.76px;font-size:18px;line-height:18px;color:#d2d2d2;letter-spacing:0.88px;">Lollipop_#</div><svg class="a" style="left:48px;top:424px;" width="20" height="16" viewBox="0 0 20 16"><path d="M1 2.5Q1 1.5 2 1.5H7.5L9.5 3.5H18Q19 3.5 19 4.5V14Q19 15 18 15H2Q1 15 1 14Z" fill="#c4c4c4"/></svg><svg class="a" style="left:28px;top:426px;" width="12" height="13" viewBox="0 0 12 13"><path d="M0.5 0.3V12.7L11.5 6.5Z" fill="#747474"/></svg><div class="t" style="left:70.52px;top:422.76px;font-size:18px;line-height:18px;color:#d2d2d2;letter-spacing:1.08px;">NiceVibrations</div><svg class="a" style="left:48px;top:448px;" width="20" height="16" viewBox="0 0 20 16"><path d="M1 2.5Q1 1.5 2 1.5H7.5L9.5 3.5H18Q19 3.5 19 4.5V14Q19 15 18 15H2Q1 15 1 14Z" fill="#c4c4c4"/></svg><svg class="a" style="left:28px;top:450px;" width="12" height="13" viewBox="0 0 12 13"><path d="M0.5 0.3V12.7L11.5 6.5Z" fill="#747474"/></svg><div class="t" style="left:70.52px;top:446.76px;font-size:18px;line-height:18px;color:#d2d2d2;letter-spacing:0.97px;">PathCreator</div><svg class="a" style="left:48px;top:472px;" width="20" height="16" viewBox="0 0 20 16"><path d="M1 2.5Q1 1.5 2 1.5H7.5L9.5 3.5H18Q19 3.5 19 4.5V14Q19 15 18 15H2Q1 15 1 14Z" fill="#c4c4c4"/></svg><svg class="a" style="left:28px;top:474px;" width="12" height="13" viewBox="0 0 12 13"><path d="M0.5 0.3V12.7L11.5 6.5Z" fill="#747474"/></svg><div class="t" style="left:70.52px;top:470.76px;font-size:18px;line-height:18px;color:#d2d2d2;letter-spacing:1.15px;">Plugins</div><svg class="a" style="left:48px;top:496px;" width="20" height="16" viewBox="0 0 20 16"><path d="M1 2.5Q1 1.5 2 1.5H7.5L9.5 3.5H18Q19 3.5 19 4.5V14Q19 15 18 15H2Q1 15 1 14Z" fill="#c4c4c4"/></svg><svg class="a" style="left:28px;top:498px;" width="12" height="13" viewBox="0 0 12 13"><path d="M0.5 0.3V12.7L11.5 6.5Z" fill="#747474"/></svg><div class="t" style="left:71.02px;top:494.76px;font-size:18px;line-height:18px;color:#d2d2d2;letter-spacing:0.80px;">PostProcessing</div><svg class="a" style="left:48px;top:520px;" width="20" height="16" viewBox="0 0 20 16"><path d="M1 2.5Q1 1.5 2 1.5H7.5L9.5 3.5H18Q19 3.5 19 4.5V14Q19 15 18 15H2Q1 15 1 14Z" fill="#c4c4c4"/></svg><svg class="a" style="left:28px;top:522px;" width="12" height="13" viewBox="0 0 12 13"><path d="M0.5 0.3V12.7L11.5 6.5Z" fill="#747474"/></svg><div class="t" style="left:71.02px;top:518.76px;font-size:18px;line-height:18px;color:#d2d2d2;letter-spacing:0.93px;">Prefabs</div><svg class="a" style="left:48px;top:544px;" width="20" height="16" viewBox="0 0 20 16"><path d="M1 2.5Q1 1.5 2 1.5H7.5L9.5 3.5H18Q19 3.5 19 4.5V14Q19 15 18 15H2Q1 15 1 14Z" fill="#c4c4c4"/></svg><svg class="a" style="left:28px;top:546px;" width="12" height="13" viewBox="0 0 12 13"><path d="M0.5 0.3V12.7L11.5 6.5Z" fill="#747474"/></svg><div class="t" style="left:71.65px;top:542.76px;font-size:18px;line-height:18px;color:#d2d2d2;letter-spacing:1.13px;">QuickOutline</div><svg class="a" style="left:48px;top:568px;" width="20" height="16" viewBox="0 0 20 16"><path d="M1 2.5Q1 1.5 2 1.5H7.5L9.5 3.5H18Q19 3.5 19 4.5V14Q19 15 18 15H2Q1 15 1 14Z" fill="#c4c4c4"/></svg><svg class="a" style="left:28px;top:570px;" width="12" height="13" viewBox="0 0 12 13"><path d="M0.5 0.3V12.7L11.5 6.5Z" fill="#747474"/></svg><div class="t" style="left:71.02px;top:566.76px;font-size:18px;line-height:18px;color:#d2d2d2;letter-spacing:0.79px;">Resources</div><svg class="a" style="left:48px;top:592px;" width="21" height="16" viewBox="0 0 21 16"><path d="M1 2.5Q1 1.5 2 1.5H7.5L9.5 3.5H16Q17 3.5 17 4.5V6H6L3 15H1.5Q1 15 1 14Z" fill="#c4c4c4"/><path d="M6.5 7H20.5L17.5 15H3Z" fill="#c4c4c4"/></svg><svg class="a" style="left:27.5px;top:595px;" width="13" height="12" viewBox="0 0 13 12"><path d="M0.3 0.5H12.3L6.3 11.5Z" fill="#747474"/></svg><div class="t" style="left:71.69px;top:590.76px;font-size:18px;line-height:18px;color:#d2d2d2;letter-spacing:1.15px;">Scenes</div><svg class="a" style="left:69px;top:616px;" width="21" height="16" viewBox="0 0 21 16"><path d="M1 2.5Q1 1.5 2 1.5H7.5L9.5 3.5H16Q17 3.5 17 4.5V6H6L3 15H1.5Q1 15 1 14Z" fill="#c4c4c4"/><path d="M6.5 7H20.5L17.5 15H3Z" fill="#c4c4c4"/></svg><svg class="a" style="left:49px;top:619px;" width="13" height="12" viewBox="0 0 13 12"><path d="M0.3 0.5H12.3L6.3 11.5Z" fill="#747474"/></svg><div class="t" style="left:92.02px;top:614.76px;font-size:18px;line-height:18px;color:#d2d2d2;letter-spacing:1.42px;">Levels</div><svg class="a" style="left:89px;top:639px;" width="18" height="18" viewBox="0 0 18 18"><g transform="scale(1.0 1.0)" stroke="#e4e4e4" stroke-width="1.7" fill="none" stroke-linejoin="round"><path d="M1.3 9L5.7 4.4L8.6 2.7L15.4 1.2L16.9 7.3L16.1 9L16.9 10.7L15.2 16.8L8.6 15.2L5.7 13.6Z"/><path d="M1.5 9H11L14.3 2.8M11 9L14.3 15.2"/></g></svg><div class="t" style="left:112.92px;top:638.76px;font-size:18px;line-height:18px;color:#d2d2d2;letter-spacing:0.38px;">Heel_1</div><svg class="a" style="left:89px;top:663px;" width="18" height="18" viewBox="0 0 18 18"><g transform="scale(1.0 1.0)" stroke="#e4e4e4" stroke-width="1.7" fill="none" stroke-linejoin="round"><path d="M1.3 9L5.7 4.4L8.6 2.7L15.4 1.2L16.9 7.3L16.1 9L16.9 10.7L15.2 16.8L8.6 15.2L5.7 13.6Z"/><path d="M1.5 9H11L14.3 2.8M11 9L14.3 15.2"/></g></svg><div class="t" style="left:112.92px;top:662.76px;font-size:18px;line-height:18px;color:#d2d2d2;letter-spacing:0.61px;">Lollipop_1</div><svg class="a" style="left:89px;top:687px;" width="18" height="18" viewBox="0 0 18 18"><g transform="scale(1.0 1.0)" stroke="#e4e4e4" stroke-width="1.7" fill="none" stroke-linejoin="round"><path d="M1.3 9L5.7 4.4L8.6 2.7L15.4 1.2L16.9 7.3L16.1 9L16.9 10.7L15.2 16.8L8.6 15.2L5.7 13.6Z"/><path d="M1.5 9H11L14.3 2.8M11 9L14.3 15.2"/></g></svg><div class="t" style="left:112.92px;top:686.76px;font-size:18px;line-height:18px;color:#d2d2d2;letter-spacing:1.00px;">Lollipop_neww</div><svg class="a" style="left:89px;top:711px;" width="18" height="18" viewBox="0 0 18 18"><g transform="scale(1.0 1.0)" stroke="#e4e4e4" stroke-width="1.7" fill="none" stroke-linejoin="round"><path d="M1.3 9L5.7 4.4L8.6 2.7L15.4 1.2L16.9 7.3L16.1 9L16.9 10.7L15.2 16.8L8.6 15.2L5.7 13.6Z"/><path d="M1.5 9H11L14.3 2.8M11 9L14.3 15.2"/></g></svg><div class="t" style="left:113.59px;top:710.76px;font-size:18px;line-height:18px;color:#d2d2d2;letter-spacing:-0.23px;">Surf_1</div><svg class="a" style="left:69px;top:735px;" width="18" height="18" viewBox="0 0 18 18"><g transform="scale(1.0 1.0)" stroke="#e4e4e4" stroke-width="1.7" fill="none" stroke-linejoin="round"><path d="M1.3 9L5.7 4.4L8.6 2.7L15.4 1.2L16.9 7.3L16.1 9L16.9 10.7L15.2 16.8L8.6 15.2L5.7 13.6Z"/><path d="M1.5 9H11L14.3 2.8M11 9L14.3 15.2"/></g></svg><div class="t" style="left:92.02px;top:734.76px;font-size:18px;line-height:18px;color:#d2d2d2;letter-spacing:1.36px;">Boot</div><svg class="a" style="left:69px;top:759px;" width="18" height="18" viewBox="0 0 18 18"><g transform="scale(1.0 1.0)" stroke="#e4e4e4" stroke-width="1.7" fill="none" stroke-linejoin="round"><path d="M1.3 9L5.7 4.4L8.6 2.7L15.4 1.2L16.9 7.3L16.1 9L16.9 10.7L15.2 16.8L8.6 15.2L5.7 13.6Z"/><path d="M1.5 9H11L14.3 2.8M11 9L14.3 15.2"/></g></svg><div class="t" style="left:92.60px;top:758.76px;font-size:18px;line-height:18px;color:#d2d2d2;letter-spacing:0.73px;">Game</div><svg class="a" style="left:69px;top:783px;" width="18" height="18" viewBox="0 0 18 18"><g transform="scale(1.0 1.0)" stroke="#e4e4e4" stroke-width="1.7" fill="none" stroke-linejoin="round"><path d="M1.3 9L5.7 4.4L8.6 2.7L15.4 1.2L16.9 7.3L16.1 9L16.9 10.7L15.2 16.8L8.6 15.2L5.7 13.6Z"/><path d="M1.5 9H11L14.3 2.8M11 9L14.3 15.2"/></g></svg><div class="t" style="left:92.26px;top:782.76px;font-size:18px;line-height:18px;color:#d2d2d2;letter-spacing:1.14px;">home</div><svg class="a" style="left:69px;top:807px;" width="18" height="18" viewBox="0 0 18 18"><g transform="scale(1.0 1.0)" stroke="#e4e4e4" stroke-width="1.7" fill="none" stroke-linejoin="round"><path d="M1.3 9L5.7 4.4L8.6 2.7L15.4 1.2L16.9 7.3L16.1 9L16.9 10.7L15.2 16.8L8.6 15.2L5.7 13.6Z"/><path d="M1.5 9H11L14.3 2.8M11 9L14.3 15.2"/></g></svg><div class="t" style="left:93.23px;top:806.76px;font-size:18px;line-height:18px;color:#d2d2d2;letter-spacing:0.74px;">testCommon</div><svg class="a" style="left:48px;top:832px;" width="20" height="16" viewBox="0 0 20 16"><path d="M1 2.5Q1 1.5 2 1.5H7.5L9.5 3.5H18Q19 3.5 19 4.5V14Q19 15 18 15H2Q1 15 1 14Z" fill="#c4c4c4"/></svg><svg class="a" style="left:28px;top:834px;" width="12" height="13" viewBox="0 0 12 13"><path d="M0.5 0.3V12.7L11.5 6.5Z" fill="#747474"/></svg><div class="t" style="left:71.69px;top:830.76px;font-size:18px;line-height:18px;color:#d2d2d2;letter-spacing:0.91px;">Scripts</div><svg class="a" style="left:48px;top:856px;" width="20" height="16" viewBox="0 0 20 16"><path d="M1 2.5Q1 1.5 2 1.5H7.5L9.5 3.5H18Q19 3.5 19 4.5V14Q19 15 18 15H2Q1 15 1 14Z" fill="#c4c4c4"/></svg><svg class="a" style="left:28px;top:858px;" width="12" height="13" viewBox="0 0 12 13"><path d="M0.5 0.3V12.7L11.5 6.5Z" fill="#747474"/></svg><div class="t" style="left:71.69px;top:854.76px;font-size:18px;line-height:18px;color:#d2d2d2;letter-spacing:0.82px;">Shaders</div></div><svg class="a" style="left:1489.5px;top:143px;" width="11" height="7" viewBox="0 0 11 7"><path d="M0.5 6.5H10.5L5.5 0.5Z" fill="#c4c4c4"/></svg><div class="a" style="left:1487.5px;top:202px;width:15.5px;height:445px;background:#5f5f5f;border-radius:8px;"></div><svg class="a" style="left:1489.5px;top:998.5px;" width="11" height="7" viewBox="0 0 11 7"><path d="M0.5 0.5H10.5L5.5 6.5Z" fill="#c4c4c4"/></svg><div class="a" style="left:1504px;top:74px;width:3px;height:943px;background:#191919;"></div><div class="a" style="left:1507px;top:74px;width:411px;height:30px;background:#262626;"></div><div class="a" style="left:1507px;top:75px;width:143px;height:29px;background:#3c3c3c;border-radius:4px 4px 0 0;"></div><svg class="a" style="left:1520.5px;top:83px;" width="15" height="15" viewBox="0 0 15 15"><circle cx="7.5" cy="7.5" r="7.2" fill="#d0d0d0"/><rect x="6.2" y="6" width="2.6" height="6" fill="#3c3c3c"/><circle cx="7.5" cy="3.8" r="1.4" fill="#3c3c3c"/></svg><div class="t" style="left:1541.344px;top:82.46px;font-size:18px;line-height:18px;color:#d2d2d2;font-weight:400;letter-spacing:1.11px;">Inspector</div><svg class="a" style="left:1664.5px;top:81px;" width="15" height="17" viewBox="0 0 15 17"><rect x="0.8" y="0.8" width="13.4" height="15.4" fill="#d0d0d0"/><g fill="#232323"><rect x="3" y="3.5" width="9" height="1.5"/><rect x="3" y="6.8" width="6.5" height="1.5"/><rect x="3" y="10" width="9" height="1.5"/><rect x="3" y="13" width="6.5" height="1.2"/></g></svg><div class="t" style="left:1686.1px;top:82.46px;font-size:18px;line-height:18px;color:#d2d2d2;font-weight:400;letter-spacing:1.11px;">Console</div><svg class="a" style="left:1868px;top:83px;" width="14" height="16" viewBox="0 0 14 16"><path d="M2.2 3.2A3.6 3.6 0 0 1 9.4 2.8V7" stroke="#c4c4c4" stroke-width="1.7" fill="none"/><rect x="1" y="7" width="11" height="7" fill="none" stroke="#c4c4c4" stroke-width="1.8"/></svg><svg class="a" style="left:1896px;top:81px;" width="6" height="18" viewBox="0 0 6 18"><g fill="#c4c4c4"><circle cx="3" cy="3.3" r="2"/><circle cx="3" cy="9" r="2"/><circle cx="3" cy="14.7" r="2"/></g></svg><div class="a" style="left:1507px;top:104px;width:411px;height:910px;background:#383838;"></div><div class="a" style="left:1507px;top:104px;width:411px;height:78px;background:#3d3d3d;"></div><svg class="a" style="left:1518px;top:117px;" width="38" height="37" viewBox="0 0 38 37"><g transform="scale(2.111111111111111 2.0555555555555554)" stroke="#eaeaea" stroke-width="1.55" fill="none" stroke-linejoin="round"><path d="M1.3 9L5.7 4.4L8.6 2.7L15.4 1.2L16.9 7.3L16.1 9L16.9 10.7L15.2 16.8L8.6 15.2L5.7 13.6Z"/><path d="M1.5 9H11L14.3 2.8M11 9L14.3 15.2"/></g></svg><div class="t" style="left:1574.283px;top:116.34px;font-size:18.5px;line-height:18.5px;color:#c8c8c8;font-weight:400;letter-spacing:1.38px;">Lollipop_#</div><svg class="a" style="left:1900px;top:115px;" width="15" height="15" viewBox="0 0 15 15"><g transform="translate(7.5 7.5)" fill="#c8c8c8"><circle r="4.8"/><g id="tooth"><rect x="-1.7" y="-7.5" width="3.4" height="4"/></g><rect x="-1.7" y="3.5" width="3.4" height="4"/><rect x="-7.5" y="-1.7" width="4" height="3.4"/><rect x="3.5" y="-1.7" width="4" height="3.4"/><g transform="rotate(45)"><rect x="-1.7" y="-7.5" width="3.4" height="4"/><rect x="-1.7" y="3.5" width="3.4" height="4"/><rect x="-7.5" y="-1.7" width="4" height="3.4"/><rect x="3.5" y="-1.7" width="4" height="3.4"/></g></g><circle cx="7.5" cy="7.5" r="2" fill="#3d3d3d"/></svg><div class="a" style="left:1846px;top:148px;width:66px;height:24px;background:#4f4f4f;border-radius:3px;border:1px solid #2a2a2a;box-sizing:border-box;"></div><div class="t" style="left:1853.954px;top:150.76px;font-size:18px;line-height:18px;color:#e0e0e0;font-weight:400;letter-spacing:1.06px;">Open</div><div class="a" style="left:1507px;top:981px;width:411px;height:1px;background:#242424;"></div><div class="a" style="left:1507px;top:982px;width:411px;height:32px;background:#3e3e3e;"></div><div class="t" style="left:1518.08px;top:990.29px;font-size:17.5px;line-height:17.5px;color:#c8c8c8;font-weight:700;letter-spacing:1.06px;">Asset Labels</div><div class="a" style="left:0px;top:1014px;width:1918px;height:3px;background:#191919;"></div><div class="a" style="left:144px;top:360px;width:954px;height:200px;background:#383838;box-shadow:0 2px 6px rgba(0,0,0,0.45);"></div><div class="a" style="left:144px;top:360px;width:954px;height:1px;background:#f0f0f0;"></div><div class="a" style="left:144px;top:361px;width:954px;height:31px;background:#262626;"></div><div class="a" style="left:144px;top:364px;width:237px;height:28px;background:#3c3c3c;border-radius:3px 3px 0 0;"></div><div class="a" style="left:144px;top:364px;width:237px;height:3px;background:#3b7fd3;border-radius:2px 2px 0 0;"></div><div class="t" style="left:152.7125px;top:372.19px;font-size:17.5px;line-height:17.5px;color:#d2d2d2;font-weight:400;letter-spacing:1.06px;">Surf.CreateLevelWizard</div><svg class="a" style="left:1028.5px;top:367.2px;" width="6" height="18" viewBox="0 0 6 18"><g fill="#c4c4c4"><circle cx="3" cy="3.3" r="2"/><circle cx="3" cy="9" r="2"/><circle cx="3" cy="14.7" r="2"/></g></svg><svg class="a" style="left:1050px;top:368px;" width="18" height="17" viewBox="0 0 18 17"><rect x="1.5" y="1.5" width="15" height="14" fill="none" stroke="#d0d0d0" stroke-width="1.5"/><rect x="1.5" y="1.5" width="15" height="3" fill="#d0d0d0"/></svg><svg class="a" style="left:1076px;top:369px;" width="14" height="14" viewBox="0 0 14 14"><path d="M1.5 1.5L12.5 12.5M12.5 1.5L1.5 12.5" stroke="#d0d0d0" stroke-width="1.9"/></svg><div class="t" style="left:150.2825px;top:398.69px;font-size:17.5px;line-height:17.5px;color:#d2d2d2;font-weight:700;letter-spacing:1.17px;">Create Level</div><div class="t" style="left:149.565px;top:426.19px;font-size:17.5px;line-height:17.5px;color:#d2d2d2;font-weight:400;letter-spacing:1.19px;">Level Prefab</div><div class="t" style="left:149.565px;top:456.49px;font-size:17.5px;line-height:17.5px;color:#d2d2d2;font-weight:400;letter-spacing:1.14px;">LevelComponents Prefab</div><div class="a" style="left:376.5px;top:420.4px;width:696px;height:26px;background:#2c5d8b;border-radius:3px 0 0 3px;"></div><div class="a" style="left:1072px;top:420.4px;width:21px;height:26px;background:#303030;border-radius:0 3px 3px 0;"></div><div class="a" style="left:376.5px;top:449.3px;width:696px;height:26.8px;background:#2a2a2a;border-radius:3px 0 0 3px;"></div><div class="a" style="left:1072px;top:449.3px;width:21px;height:26.8px;background:#303030;border-radius:0 3px 3px 0;"></div><svg class="a" style="left:381.5px;top:427px;" width="16" height="17" viewBox="0 0 16 17"><g stroke="#bcd8f0" stroke-width="1.2" fill="none" stroke-linejoin="round"><path d="M1 4.5L8 1L15 4.5V12L8 15.5L1 12Z"/><path d="M1 4.5L8 8L15 4.5M8 8V15.5"/></g></svg><svg class="a" style="left:381.5px;top:457px;" width="16" height="17" viewBox="0 0 16 17"><g stroke="#bdbdbd" stroke-width="1.2" fill="none" stroke-linejoin="round"><path d="M1 4.5L8 1L15 4.5V12L8 15.5L1 12Z"/><path d="M1 4.5L8 8L15 4.5M8 8V15.5"/></g></svg><div class="t" style="left:399.165px;top:426.49px;font-size:17.5px;line-height:17.5px;color:#d6e8fa;font-weight:400;letter-spacing:1.05px;">None (Game Object)</div><div class="t" style="left:399.165px;top:456.49px;font-size:17.5px;line-height:17.5px;color:#d2d2d2;font-weight:400;letter-spacing:1.05px;">None (Game Object)</div><svg class="a" style="left:1077.5px;top:425px;" width="16" height="16" viewBox="0 0 16 16"><circle cx="8" cy="8" r="6.6" fill="none" stroke="#cfcfcf" stroke-width="1.5"/><circle cx="8" cy="8" r="2.2" fill="#cfcfcf"/></svg><svg class="a" style="left:1077.5px;top:455px;" width="16" height="16" viewBox="0 0 16 16"><circle cx="8" cy="8" r="6.6" fill="none" stroke="#cfcfcf" stroke-width="1.5"/><circle cx="8" cy="8" r="2.2" fill="#cfcfcf"/></svg><div class="t" style="left:150.318px;top:483.38px;font-size:15.5px;line-height:15.5px;color:#d2d2d2;font-weight:400;letter-spacing:0.61px;">- Search for the Prefabs in /Assets/LevelTool/Prefabs/</div><div class="t" style="left:150.318px;top:505.28px;font-size:15.5px;line-height:15.5px;color:#d2d2d2;font-weight:400;letter-spacing:0.59px;">- After creating, look in scene for /LevelComponents/Runway/Display/ and double click on PathCreator for the path to appear</div><div class="a" style="left:149.5px;top:526px;width:943px;height:25px;background:#585858;border-radius:4px;box-shadow:0 1px 0 #232323;"></div><div class="t" style="left:562.925px;top:531.09px;font-size:17.5px;line-height:17.5px;color:#e0e0e0;font-weight:400;letter-spacing:1.21px;">Create Level</div><svg class="a" style="left:750px;top:426px;" width="40" height="52" viewBox="0 0 40 52"><rect x="8.299999999999955" y="28.399999999999977" width="18.3" height="12" fill="none" stroke="#f2f2f2" stroke-width="1.3" stroke-dasharray="1.3 1.3"/>
<path d="M6.2 4.0L6.2 25.2L11.2 20.5L14.8 30.9L18.0 30.2L15.2 20.2L21.5 19.6Z" fill="#ffffff" stroke="#000" stroke-width="1.1" stroke-linejoin="miter"/>
<rect x="21.799999999999955" y="34.39999999999998" width="14.6" height="14.8" fill="#ffffff" stroke="#000" stroke-width="1.1"/>
<path d="M29.0 38.0V 45.6M25.2 41.8H32.69999999999993" stroke="#000" stroke-width="2.3"/></svg>
</body></html>
